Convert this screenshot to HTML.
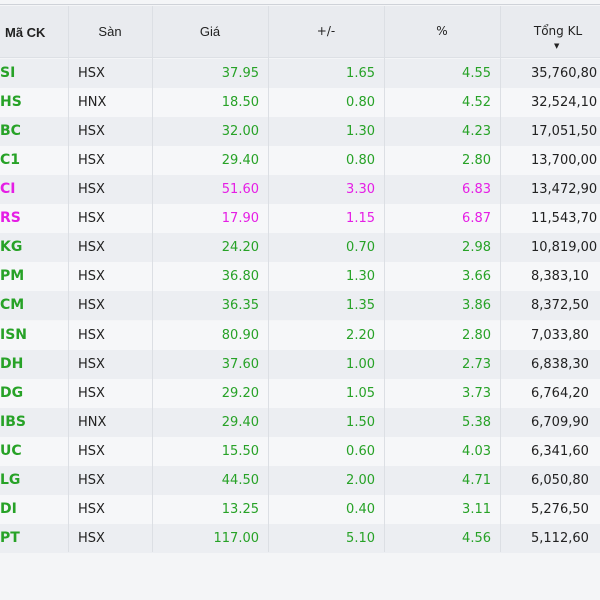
<!DOCTYPE html>
<html><head><meta charset="utf-8"><style>
*{margin:0;padding:0;box-sizing:border-box}
body{width:600px;height:600px;overflow:hidden;background:#f4f5f7;font-family:"DejaVu Sans","Liberation Sans",sans-serif;font-size:13px;position:relative}
.top{position:absolute;left:0;top:0;width:600px;height:5px;background:#f4f5f7;border-bottom:1px solid #cfd2d8}
.hdr{position:absolute;top:6px;left:0;width:600px;height:52px;background:#e9ebef;border-bottom:1px solid #dde0e5}
.row{position:absolute;left:0;width:600px;height:29px;line-height:29px}
.c{position:absolute;top:0;height:100%;white-space:nowrap}
.v{position:absolute;top:0;bottom:0;width:1px;background:#dcdfe4}
.g{color:#27a227}.m{color:#e51ee5}
.tk{font-weight:bold;left:0;font-size:14px}
.s{left:78px;color:#222}
.p{right:341px;text-align:right}
.d{right:225px;text-align:right}
.q{right:109px;text-align:right}
.k{left:531px;color:#222}
.h{position:absolute;color:#222;font-size:12px;text-align:center}
</style></head><body>
<div class="top"></div>
<div class="hdr">
<div class="h" style="left:5px;top:19px;font-weight:bold;font-family:'Liberation Sans',sans-serif;font-size:13px">Mã CK</div>
<div class="h" style="left:68px;width:84px;top:18px;font-family:'Liberation Sans',sans-serif;font-size:13px">Sàn</div>
<div class="h" style="left:152px;width:116px;top:18px;font-family:'Liberation Sans',sans-serif;font-size:13px">Giá</div>
<div class="h" style="left:268px;width:116px;top:18px">+/-</div>
<div class="h" style="left:384px;width:116px;top:18px">%</div>
<div class="h" style="left:500px;width:116px;top:18px">Tổng KL</div>
<div class="h" style="left:554px;top:36px;font-size:7px">▼</div>
</div>
<div id="rows"></div>
<div class="v" style="left:68px;top:6px;height:546px"></div>
<div class="v" style="left:152px;top:6px;height:546px"></div>
<div class="v" style="left:268px;top:6px;height:546px"></div>
<div class="v" style="left:384px;top:6px;height:546px"></div>
<div class="v" style="left:500px;top:6px;height:546px"></div>
<script>
var d=[["SI","HSX","37.95","1.65","4.55","35,760,80","g"],["HS","HNX","18.50","0.80","4.52","32,524,10","g"],["BC","HSX","32.00","1.30","4.23","17,051,50","g"],["C1","HSX","29.40","0.80","2.80","13,700,00","g"],["CI","HSX","51.60","3.30","6.83","13,472,90","m"],["RS","HSX","17.90","1.15","6.87","11,543,70","m"],["KG","HSX","24.20","0.70","2.98","10,819,00","g"],["PM","HSX","36.80","1.30","3.66","8,383,10","g"],["CM","HSX","36.35","1.35","3.86","8,372,50","g"],["ISN","HSX","80.90","2.20","2.80","7,033,80","g"],["DH","HSX","37.60","1.00","2.73","6,838,30","g"],["DG","HSX","29.20","1.05","3.73","6,764,20","g"],["IBS","HNX","29.40","1.50","5.38","6,709,90","g"],["UC","HSX","15.50","0.60","4.03","6,341,60","g"],["LG","HSX","44.50","2.00","4.71","6,050,80","g"],["DI","HSX","13.25","0.40","3.11","5,276,50","g"],["PT","HSX","117.00","5.10","4.56","5,112,60","g"]];
var h="";d.forEach(function(r,i){var y=59+i*29.06;var bg=i%2?"#f6f7f9":"#eceef2";
h+='<div class="row" style="top:'+y+'px;background:'+bg+'"><div class="c tk '+r[6]+'">'+r[0]+'</div><div class="c s">'+r[1]+'</div><div class="c p '+r[6]+'">'+r[2]+'</div><div class="c d '+r[6]+'">'+r[3]+'</div><div class="c q '+r[6]+'">'+r[4]+'</div><div class="c k">'+r[5]+'</div></div>';});
document.getElementById("rows").innerHTML=h;
</script>
</body></html>
